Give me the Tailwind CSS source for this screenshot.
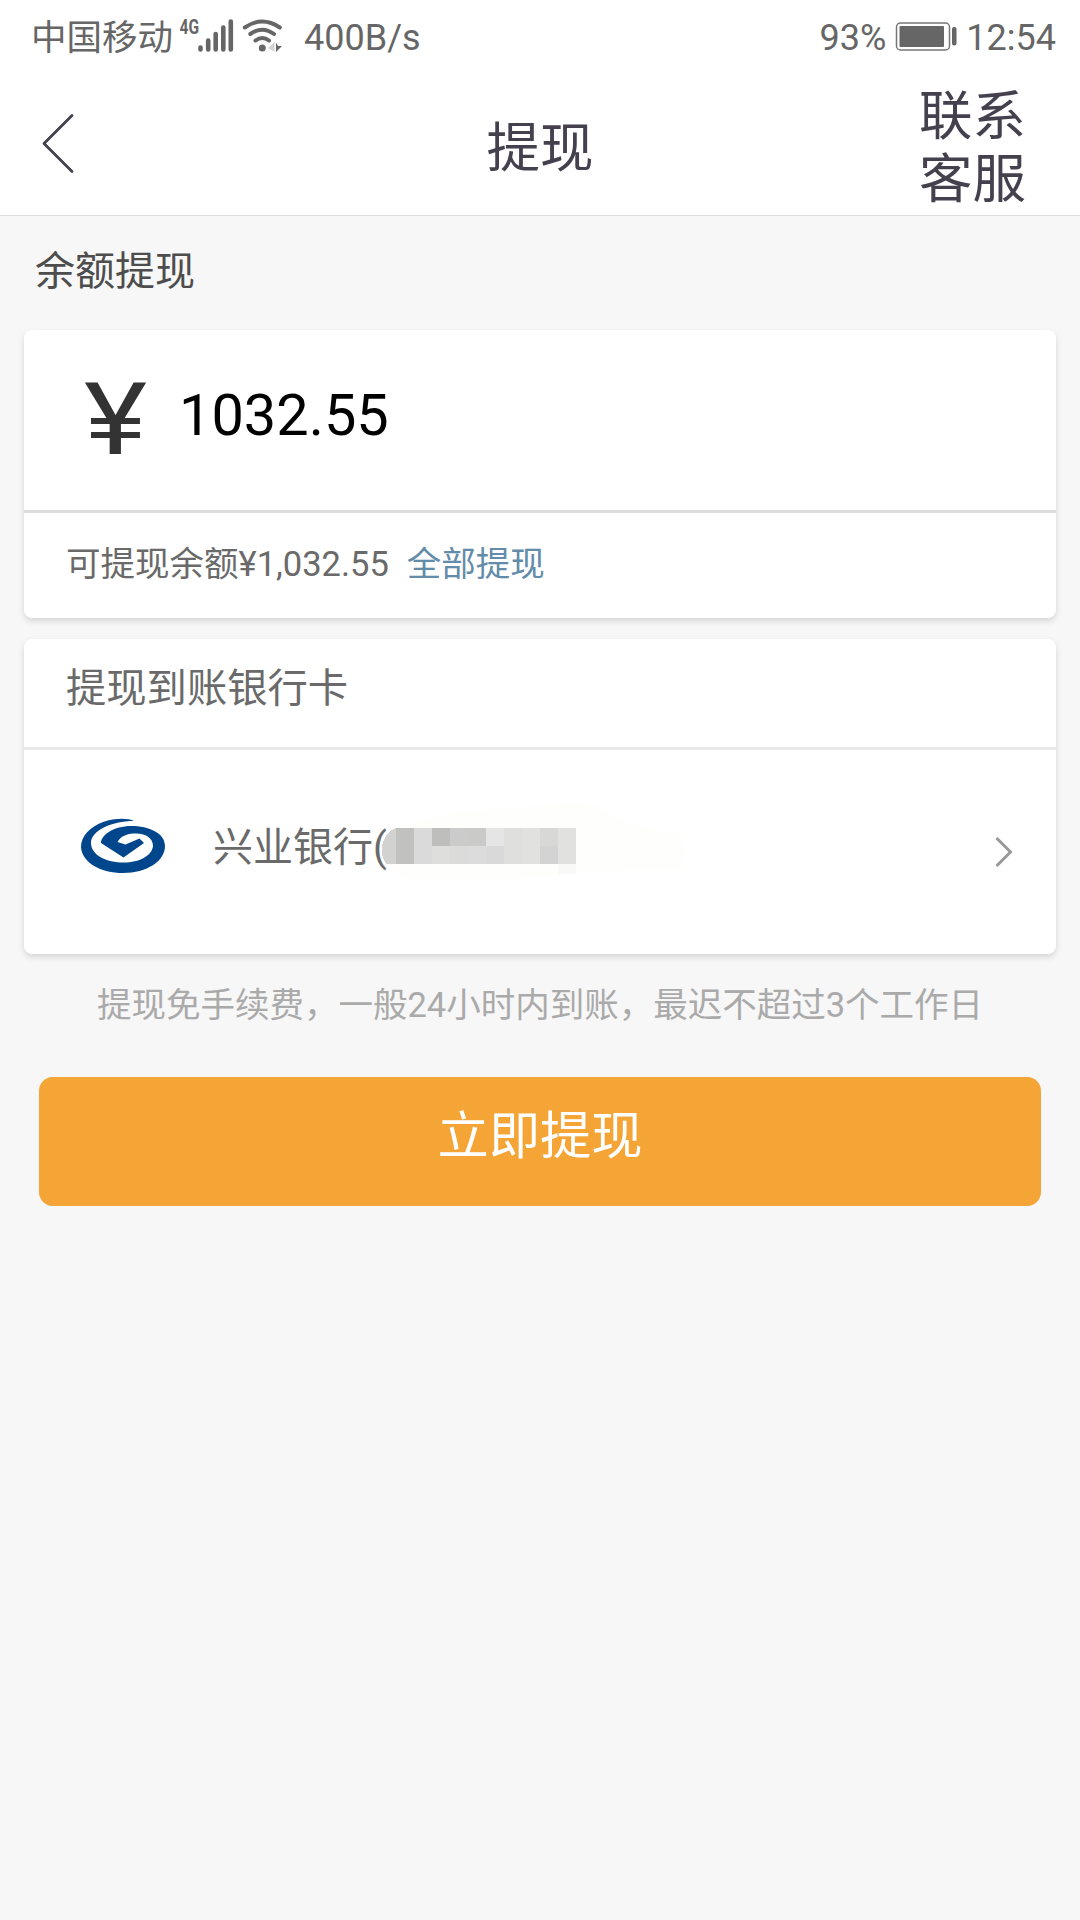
<!DOCTYPE html>
<html lang="zh-CN">
<head>
<meta charset="utf-8">
<title>提现</title>
<script src="https://cdn.jsdelivr.net/npm/@tailwindcss/browser@4"></script>
</head>
<body class="bg-[#f7f7f7]">
<div class="flex h-[1920px] w-[1080px] flex-col overflow-hidden bg-[#f7f7f7] font-[Roboto,'Noto_Sans_CJK_SC',sans-serif] whitespace-nowrap">
  <div class="bg-white border-b border-[#dcdcdc] h-[216px]">
    <!-- status bar -->
    <div class="flex h-[74px] items-center pl-[31px] pr-6 text-[36px] leading-[74px] text-[#666]">
      <span class="w-[149px] pt-[2px] text-[35.5px]">中国移动</span>
      <svg class="shrink-0" width="104" height="74" viewBox="180 0 104 74">
        <text x="179.500" y="33.500" font-size="21" font-weight="700" fill="#666" textLength="19.500" lengthAdjust="spacingAndGlyphs">4G</text>
        <g stroke="#666" stroke-width="4.600" stroke-linecap="round">
          <path d="M200.500 47.500V49.500M208.200 40.500V49.500M215.700 34V49.500M223.300 27.500V49.500M230.800 21.500V49.500"/>
        </g>
        <g fill="none" stroke="#666" stroke-width="4" stroke-linecap="round">
          <path d="M244.800 27.500Q262.300 15.500 279.800 27.500M250.300 34Q262.300 25.500 274 34M255.500 40.500Q262.300 35.500 269 40.500"/>
        </g>
        <circle cx="262.300" cy="48" r="3.500" fill="#666"/>
        <path d="M268 48L274.500 42V52Z" fill="#d4d4d4"/>
        <path d="M276 42.500L278 46H282L276 52Z" fill="#666"/>
      </svg>
      <span class="ml-[20px] pt-[2px]">400B/s</span>
      <span class="ml-auto pt-[2px]">93%</span>
      <svg class="ml-[9px] mr-[9px] shrink-0" width="62" height="74" viewBox="895 0 62 74">
        <rect x="896.500" y="23" width="53" height="27" rx="4" fill="none" stroke="#777" stroke-width="1.500"/>
        <rect x="899.500" y="26" width="44.500" height="21" rx="1" fill="#666"/>
        <rect x="952" y="27" width="4.500" height="18.500" rx="2" fill="#666"/>
      </svg>
      <span class="pt-[2px]">12:54</span>
    </div>
    <!-- title bar -->
    <div class="grid h-[141px] grid-cols-[1fr_auto_1fr] items-center text-[53.500px] text-[#44404e]">
      <svg class="ml-[39px]" width="38" height="141" viewBox="40 74 38 141"><path d="M73 115.500L45 143.500L73 171.500" fill="none" stroke="#44404e" stroke-width="2.800" stroke-linecap="round" stroke-linejoin="round"/></svg>
      <h1 class="pt-[8px] leading-[133px]">提现</h1>
      <div class="mr-[54px] justify-self-end pt-[8px] text-center leading-[62.500px]">联系<br>客服</div>
    </div>
  </div>

  <div class="h-[114px] pl-[35px] text-[40px] leading-[111px] text-[#4d4d4d]">余额提现</div>

  <!-- amount -->
  <section class="mx-6 h-[288px] shrink-0 rounded-[8px] bg-white shadow-[0_3px_6px_rgba(0,0,0,0.14)]">
    <div class="flex h-[183px] items-center border-b-[3px] border-[#dcdcdc] pl-[60px]">
      <span class="w-[95px] origin-left scale-x-[1.2] text-[100px] leading-[180px] text-[#333]">¥</span>
      <span class="text-[57.700px] leading-[170px] pb-[10px] text-black">1032.55</span>
    </div>
    <div class="flex h-[105px] gap-[18px] pl-[42px] text-[34.500px] leading-[103px] text-[#6a6a6a]">
      <span>可提现余额¥1,032.55</span><a class="text-[#628ca9]">全部提现</a>
    </div>
  </section>

  <!-- bank card -->
  <section class="mx-6 mt-[21px] h-[315px] shrink-0 rounded-[8px] bg-white shadow-[0_3px_6px_rgba(0,0,0,0.14)]">
    <div class="h-[111px] border-b-[3px] border-[#eaeaea] pl-[42px] text-[40.300px] leading-[99px] text-[#6a6a6a]">提现到账银行卡</div>
    <div class="flex h-[204px] pl-[56px] pr-[40px]">
      <svg class="shrink-0" width="86" height="204" viewBox="80 750 86 204">
        <path d="M134 821C128 818 115 818 103 822C90 827 81 836 81 847C82 863 101 873 123 873C147 873 165 861 165 846C165 833 149 826 131 826C114 826 101 835 101 843L123.500 857.500L144 843L139.500 838.500L125.500 844.500L117.500 842C121 835 129 833.500 136 833.500C147 833.500 153 839 153 846C152 856 139 862.500 124 862.500C106 862.500 91 855 91 843C91 831 111 821 134 821Z" fill="#00468c"/>
      </svg>
      <span class="ml-[47px] text-[40px] leading-[195px] text-[#6a6a6a]">兴业银行(</span>
      <!-- masked card number -->
      <svg class="ml-[-9px] shrink-0" width="310" height="204" viewBox="378 750 310 204" shape-rendering="crispEdges">
        <path d="M382 846C383 834 420 818 460 812C510 808 560 802 595 805C608 815 620 825 680 834Q688 850 680 870C600 869 570 875 500 880H416C400 876 385 866 382 846Z" fill="#fefefc"/>
        <path d="M396 828H402V864H386Q381 857 382 846Q385 832 396 828Z" fill="#d2d2d1"/>
        <path d="M396 828h18v36h-18z" fill="#c1c1c0"/>
        <path d="M414 828h18v36h-18z" fill="#dadadb"/>
        <path d="M432 828h18v18h-18z" fill="#bebebd"/><path d="M432 846h18v18h-18z" fill="#dededd"/>
        <path d="M450 828h18v18h-18z" fill="#cbcbcc"/><path d="M450 846h18v18h-18z" fill="#dbdbda"/>
        <path d="M468 828h18v18h-18z" fill="#cacac9"/><path d="M468 846h18v18h-18z" fill="#dcdcdc"/>
        <path d="M486 828h18v18h-18z" fill="#e5e5e5"/><path d="M486 846h18v18h-18z" fill="#d9d9da"/>
        <path d="M504 828h18v36h-18z" fill="#dfdfde"/>
        <path d="M522 828h18v36h-18z" fill="#e1e1e0"/>
        <path d="M540 828h18v18h-18z" fill="#d8d8d6"/><path d="M540 846h18v18h-18z" fill="#d3d3d4"/>
        <path d="M558 828h18v36h-18z" fill="#e1e1e0"/>
        <path d="M558 864h18v10h-18z" fill="#f9f9f8"/>
      </svg>
      <svg class="ml-auto shrink-0" width="24" height="204" viewBox="992 750 24 204"><path d="M996.500 838L1010.500 852L996.500 866" fill="none" stroke="#999" stroke-width="3"/></svg>
    </div>
  </section>

  <p class="mt-[1px] h-[122px] shrink-0 text-center text-[34.500px] leading-[100px] text-[#aaa]">提现免手续费，一般24小时内到账，最迟不超过3个工作日</p>

  <button class="mx-[39px] h-[129px] shrink-0 rounded-[14px] bg-[#f4a536] pb-[9px] text-[51.300px] leading-[120px] text-white">立即提现</button>
</div>
</body>
</html>
